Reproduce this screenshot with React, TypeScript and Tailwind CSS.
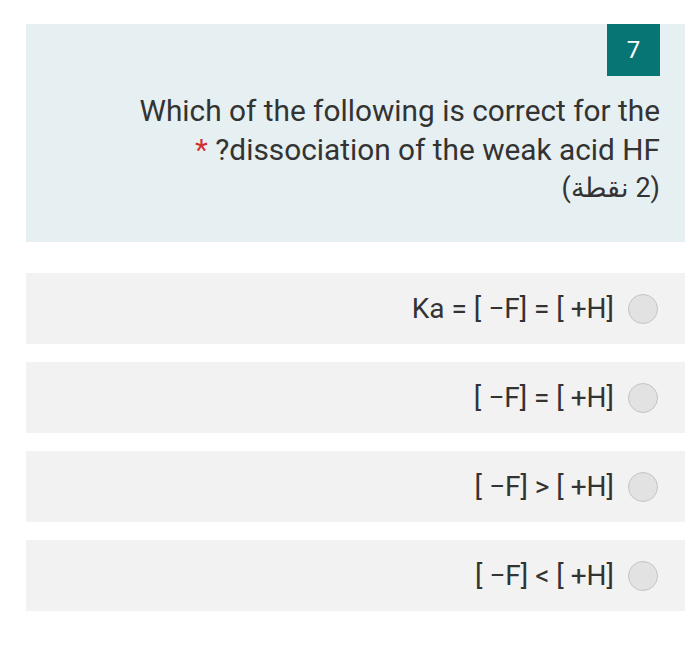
export default function App() {
  const options = [
    "Ka = [ −F] = [ +H]",
    "[ −F] = [ +H]",
    "[ −F] > [ +H]",
    "[ −F] < [ +H]",
  ];

  return (
    <div
      className="w-[685px] h-[666px] bg-white overflow-hidden pt-[24px] pl-[26px]"
      style={{ fontFamily: "Roboto, 'Noto Sans', sans-serif" }}
    >
      {/* رأس السؤال */}
      <div className="h-[218px] bg-[#e6eff1] pr-[25px] flex flex-col items-end">
        <div className="w-[53px] h-[52px] bg-[#087575] text-white text-[24px] flex items-center justify-center">
          7
        </div>
        <div
          dir="rtl"
          className="mt-[16px] text-right text-[29.8px] leading-[38.5px] text-[#333333]"
        >
          <div dir="ltr">Which of the following is correct for the</div>
          <div dir="ltr">
            <span className="text-[#d32f2f]">*</span> ?dissociation of the weak acid HF
          </div>
          <div className="text-[27px]">(2 نقطة)</div>
        </div>
      </div>

      {/* الخيارات */}
      <div className="mt-[31px] flex flex-col gap-[18px]">
        {options.map((o) => (
          <div
            key={o}
            className="h-[71px] bg-[#f2f2f2] flex items-center justify-end pr-[27px] gap-[14px]"
          >
            <span className="text-[28px] text-[#333333] whitespace-pre">{o}</span>
            <span className="w-[30px] h-[30px] rounded-full bg-[#e2e2e2] border border-[#c4c4c4]" />
          </div>
        ))}
      </div>
    </div>
  );
}
